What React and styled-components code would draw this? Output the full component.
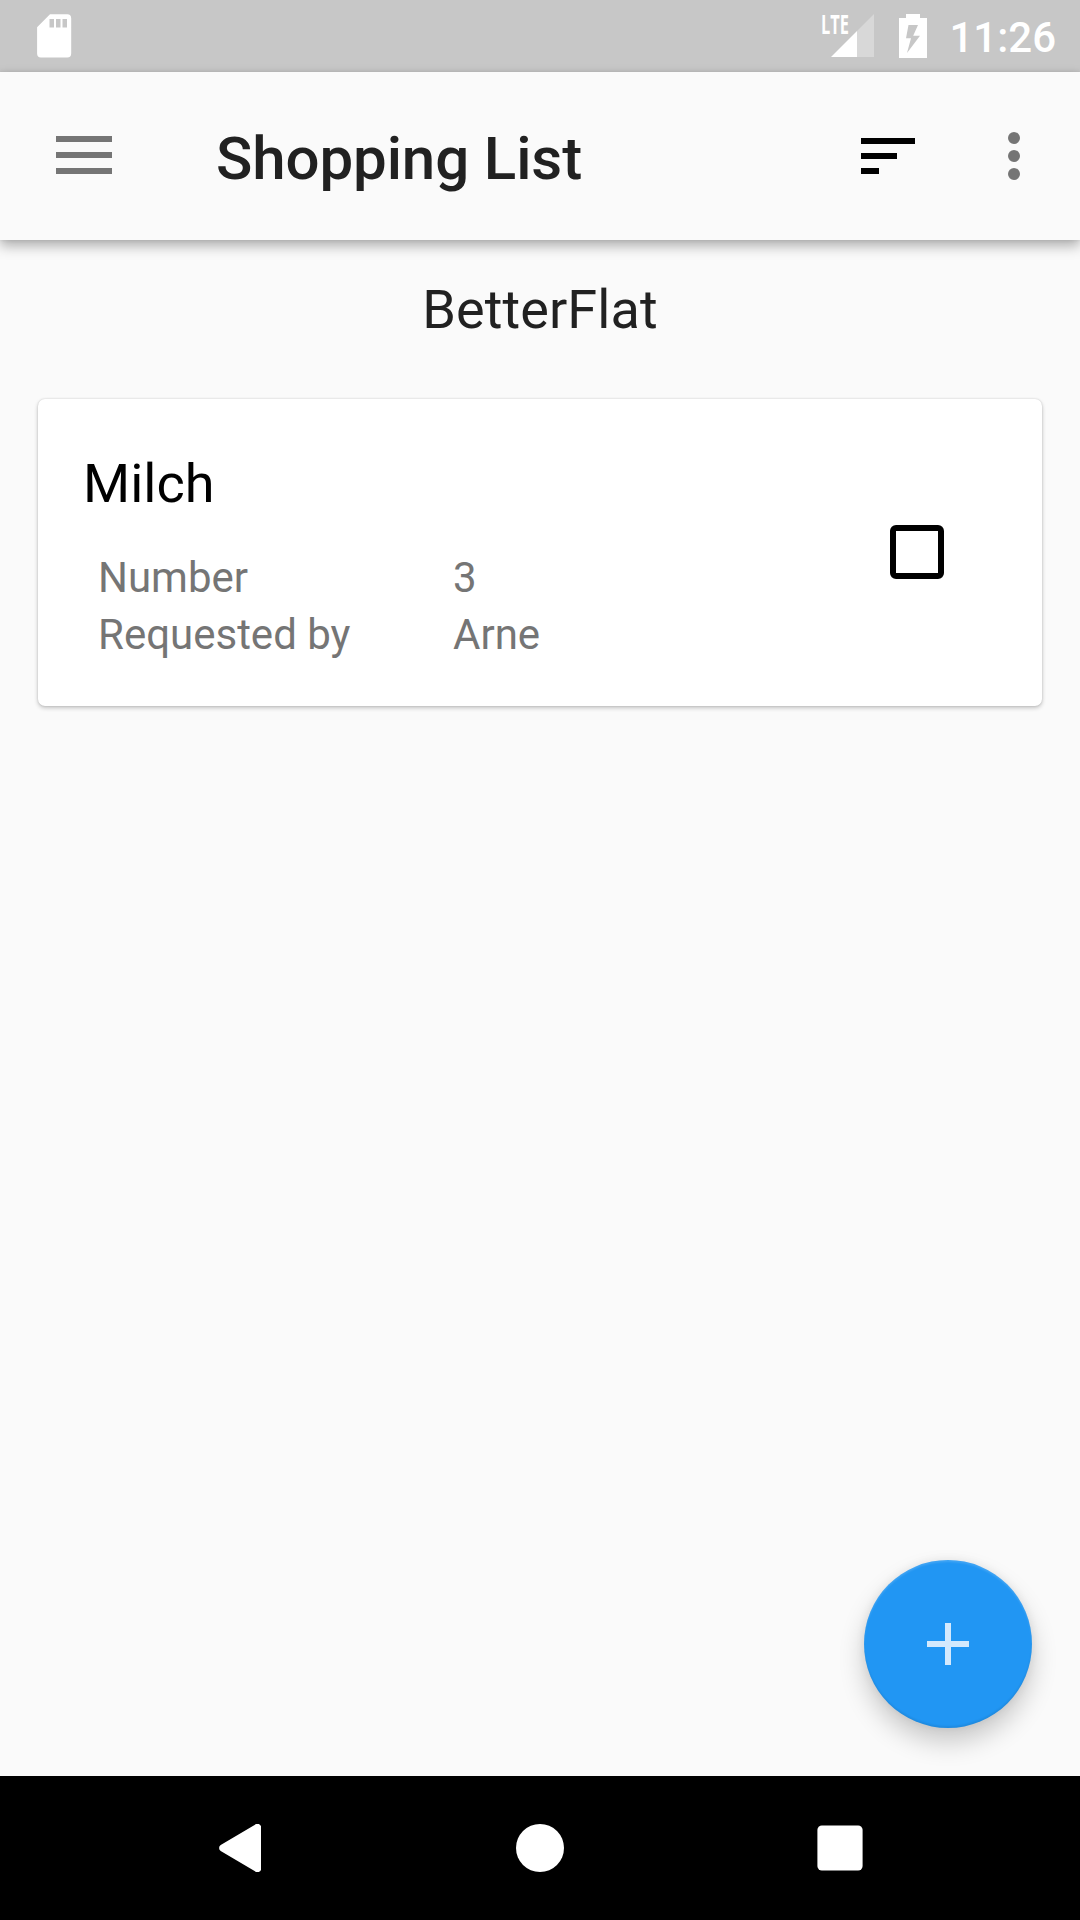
import React from "react";
import styled, { createGlobalStyle } from "styled-components";

const GlobalStyle = createGlobalStyle`
  *, *::before, *::after { box-sizing: border-box; }
  body {
    margin: 0;
    background: #fafafa;
    font-family: Roboto, "Noto Sans", sans-serif;
  }
  svg { display: block; }
`;

const Screen = styled.div`
  display: flex;
  flex-direction: column;
  width: 1080px;
  height: 1920px;
  overflow: hidden;
  background: #fafafa;
`;

const StatusBar = styled.header`
  display: flex;
  justify-content: space-between;
  flex: none;
  height: 72px;
  padding: 14px 24px 0 37px;
  background: #c7c7c7;
  color: #fff;
`;

const StatusGroup = styled.div`
  display: flex;
  align-items: flex-start;
`;

const Signal = styled.div`
  display: flex;
  align-items: flex-start;
  width: 53px;
  height: 44px;
  margin-right: 25px;
`;

const NetworkType = styled.span`
  width: 10px;
  font-family: "Open Sans", Roboto, sans-serif;
  font-size: 26px;
  font-weight: 700;
  line-height: 20px;
  white-space: nowrap;
  transform: scaleX(0.63);
  transform-origin: 0 0;
`;

const Clock = styled.time`
  margin-left: 22px;
  font-size: 42px;
  font-weight: 500;
  line-height: 48px;
`;

const Toolbar = styled.nav`
  position: relative;
  display: flex;
  align-items: center;
  flex: none;
  height: 168px;
  padding: 0 12px 0 0;
  background: #fafafa;
  box-shadow: 0 6px 12px rgba(0, 0, 0, 0.3), 0 0 4px rgba(0, 0, 0, 0.1);
`;

const IconButton = styled.button`
  display: flex;
  align-items: center;
  justify-content: center;
  flex: none;
  width: ${(p) => p.$width}px;
  height: 168px;
  padding: 0 0 ${(p) => p.$lift || 0}px;
  border: 0;
  background: none;
  color: ${(p) => p.$color || "#757575"};
`;

const Title = styled.h1`
  flex: 1;
  margin: 0;
  padding: 5px 0 0 48px;
  color: #212121;
  font-size: 60px;
  font-weight: 500;
  letter-spacing: -0.1px;
  line-height: 72px;
`;

const Content = styled.main`
  display: flex;
  flex-direction: column;
  flex: 1;
  padding: 34px 38px 0;
`;

const FlatName = styled.h2`
  margin: 0 0 53px;
  color: #212121;
  font-size: 54px;
  font-weight: 400;
  letter-spacing: 0.1px;
  line-height: 72px;
  text-align: center;
`;

const Card = styled.article`
  display: flex;
  align-items: flex-start;
  justify-content: space-between;
  height: 307px;
  padding: 0 98px 0 45px;
  border-radius: 7px;
  background: #fff;
  box-shadow: 0 2px 4px rgba(0, 0, 0, 0.22), 0 0 2px rgba(0, 0, 0, 0.16);
`;

const ItemInfo = styled.div`
  display: flex;
  flex-direction: column;
  gap: 33px;
  padding-top: 53px;
`;

const ItemName = styled.h3`
  margin: 0;
  color: #000;
  font-size: 54px;
  font-weight: 400;
  line-height: 64px;
`;

const Details = styled.dl`
  display: grid;
  grid-template-columns: 355px auto;
  margin: 0;
  padding-left: 15px;
  color: #757575;
  font-size: 42px;
  line-height: 57px;
`;

const Term = styled.dt``;

const Value = styled.dd`
  margin: 0;
`;

const Checkbox = styled.button`
  width: 54px;
  height: 54px;
  margin-top: 126px;
  padding: 0;
  border: 6px solid #000;
  border-radius: 6px;
  background: none;
`;

const AddButton = styled.button`
  display: flex;
  align-items: center;
  justify-content: center;
  align-self: flex-end;
  width: 168px;
  height: 168px;
  margin: auto 10px 48px 0;
  padding: 0;
  border: 0;
  border-radius: 50%;
  background: #2196f3;
  box-shadow: 0 14px 26px rgba(0, 0, 0, 0.2), 0 0 10px rgba(0, 0, 0, 0.07),
    inset 0 2px 2px rgba(255, 255, 255, 0.14), inset 0 -2px 2px rgba(0, 0, 0, 0.08);
`;

const SystemNav = styled.footer`
  display: flex;
  flex: none;
  height: 144px;
  padding: 0 90px;
  background: #000;
`;

const NavKey = styled.button`
  display: flex;
  align-items: center;
  justify-content: center;
  flex: 1;
  padding: 0;
  border: 0;
  background: none;
`;

const SdCardIcon = () => (
  <svg width="35" height="44" viewBox="0 0 35 44">
    <path
      fill="#fff"
      fillRule="evenodd"
      d="M13 .3H30.300A4 4 0 0 1 34.200 4.200V39.300A4 4 0 0 1 30.300 43.400H4A4 4 0 0 1 .1 39.300V13.200ZM12.500 5V13.500H17V5ZM19 5V13.500H23.500V5ZM25.500 5V13.500H30V5Z"
    />
  </svg>
);

const SignalIcon = () => (
  <svg width="43" height="43" viewBox="0 0 43 43">
    <path fill="#fff" fillOpacity="0.3" d="M43 0V43H26V17Z" />
    <path fill="#fff" d="M26 17V43H0Z" />
  </svg>
);

const BatteryIcon = () => (
  <svg width="28" height="44" viewBox="0 0 28 44">
    <path
      fill="#fff"
      fillRule="evenodd"
      d="M7 0H21V4H28V44H0V4H7ZM9.500 11L7 24.300H12L8 39L21 21.700H14.200L19 11Z"
    />
  </svg>
);

const MenuIcon = () => (
  <svg width="56" height="38" viewBox="0 0 56 38" fill="currentColor">
    <path d="M0 0H56V6H0ZM0 16H56V22H0ZM0 32H56V38H0Z" />
  </svg>
);

const SortIcon = () => (
  <svg width="54" height="36" viewBox="0 0 54 36" fill="currentColor">
    <path d="M0 0H54V6H0ZM0 15H36V21H0ZM0 30H18V36H0Z" />
  </svg>
);

const MoreIcon = () => (
  <svg width="12" height="48" viewBox="0 0 12 48" fill="currentColor">
    <circle cx="6" cy="6" r="6" />
    <circle cx="6" cy="24" r="6" />
    <circle cx="6" cy="42" r="6" />
  </svg>
);

const PlusIcon = () => (
  <svg width="42" height="42" viewBox="0 0 42 42">
    <path fill="#d3e9fd" d="M18 0H24V18H42V24H24V42H18V24H0V18H18Z" />
  </svg>
);

const BackIcon = () => (
  <svg width="42" height="48" viewBox="0 0 42 48">
    <path
      fill="#fff"
      d="M42 4V44A3.600 3.600 0 0 1 36 47.300L1.700 27A3.600 3.600 0 0 1 1.700 21L36 .7A3.600 3.600 0 0 1 42 4Z"
    />
  </svg>
);

const HomeIcon = () => (
  <svg width="48" height="48" viewBox="0 0 48 48">
    <circle cx="24" cy="24" r="24" fill="#fff" />
  </svg>
);

const RecentsIcon = () => (
  <svg width="46" height="46" viewBox="0 0 46 46">
    <rect x="0.400" y="0.400" width="45.200" height="45.200" rx="4.500" fill="#fff" />
  </svg>
);

const items = [
  {
    name: "Milch",
    details: [
      ["Number", "3"],
      ["Requested by", "Arne"],
    ],
  },
];

const ShoppingItem = ({ name, details }) => (
  <Card>
    <ItemInfo>
      <ItemName>{name}</ItemName>
      <Details>
        {details.map(([term, value]) => (
          <React.Fragment key={term}>
            <Term>{term}</Term>
            <Value>{value}</Value>
          </React.Fragment>
        ))}
      </Details>
    </ItemInfo>
    <Checkbox role="checkbox" aria-checked="false" aria-label={name} />
  </Card>
);

export default function App() {
  return (
    <>
      <GlobalStyle />
      <Screen>
        <StatusBar>
          <SdCardIcon />
          <StatusGroup>
            <Signal>
              <NetworkType>LTE</NetworkType>
              <SignalIcon />
            </Signal>
            <BatteryIcon />
            <Clock>11:26</Clock>
          </StatusGroup>
        </StatusBar>
        <Toolbar>
          <IconButton $width={168} $lift={2} aria-label="Menu">
            <MenuIcon />
          </IconButton>
          <Title>Shopping List</Title>
          <IconButton $width={144} $color="#000" aria-label="Sort">
            <SortIcon />
          </IconButton>
          <IconButton $width={108} aria-label="More options">
            <MoreIcon />
          </IconButton>
        </Toolbar>
        <Content>
          <FlatName>BetterFlat</FlatName>
          {items.map((item) => (
            <ShoppingItem key={item.name} {...item} />
          ))}
          <AddButton aria-label="Add item">
            <PlusIcon />
          </AddButton>
        </Content>
        <SystemNav>
          <NavKey aria-label="Back">
            <BackIcon />
          </NavKey>
          <NavKey aria-label="Home">
            <HomeIcon />
          </NavKey>
          <NavKey aria-label="Recent apps">
            <RecentsIcon />
          </NavKey>
        </SystemNav>
      </Screen>
    </>
  );
}
